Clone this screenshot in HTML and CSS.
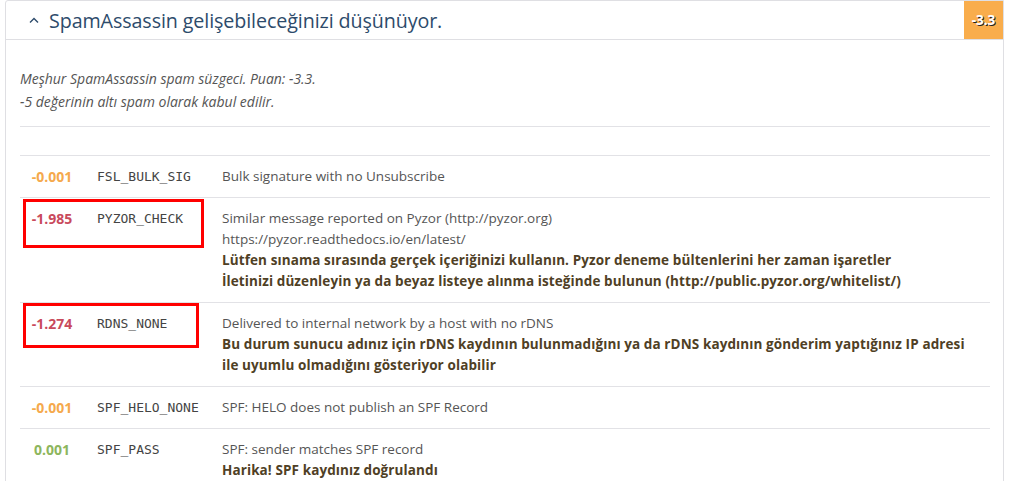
FILE: index.html
```html
<!DOCTYPE html>
<html lang="tr">
<head>
<meta charset="utf-8">
<title>SpamAssassin</title>
<link rel="stylesheet" href="styles.css">
</head>
<body>
<div class="panel">
  <div class="panel-head">
    <svg class="caret" width="10" height="6" viewBox="0 0 10 6"><polyline points="1,5.5 5,1.5 9,5.5" fill="none" stroke="#2d4b6b" stroke-width="1.4"/></svg>
    <h2 class="title">SpamAssassin gelişebileceğinizi düşünüyor.</h2>
    <span class="badge">-3.3</span>
  </div>
  <div class="panel-body">
    <p class="intro">Meşhur SpamAssassin spam süzgeci. Puan: -3.3.<br>-5 değerinin altı spam olarak kabul edilir.</p>
    <hr class="sep">
    <div class="rules">
      <div class="row">
        <div class="score warn">-0.001</div>
        <div class="code">FSL_BULK_SIG</div>
        <div class="desc">Bulk signature with no Unsubscribe</div>
      </div>
      <div class="row">
        <div class="score bad">-1.985</div>
        <div class="code">PYZOR_CHECK</div>
        <div class="desc">Similar message reported on Pyzor (http://pyzor.org)<br>https://pyzor.readthedocs.io/en/latest/<br><strong>Lütfen sınama sırasında gerçek içeriğinizi kullanın. Pyzor deneme bültenlerini her zaman işaretler<br>İletinizi düzenleyin ya da beyaz listeye alınma isteğinde bulunun (http://public.pyzor.org/whitelist/)</strong></div>
        <span class="mark mark-pyzor"></span>
      </div>
      <div class="row">
        <div class="score bad">-1.274</div>
        <div class="code">RDNS_NONE</div>
        <div class="desc">Delivered to internal network by a host with no rDNS<br><strong>Bu durum sunucu adınız için rDNS kaydının bulunmadığını ya da rDNS kaydının gönderim yaptığınız IP adresi<br>ile uyumlu olmadığını gösteriyor olabilir</strong></div>
        <span class="mark mark-rdns"></span>
      </div>
      <div class="row">
        <div class="score warn">-0.001</div>
        <div class="code">SPF_HELO_NONE</div>
        <div class="desc">SPF: HELO does not publish an SPF Record</div>
      </div>
      <div class="row">
        <div class="score good">0.001</div>
        <div class="code">SPF_PASS</div>
        <div class="desc">SPF: sender matches SPF record<br><strong>Harika! SPF kaydınız doğrulandı</strong></div>
      </div>
    </div>
  </div>
</div>
</body>
</html>
```
FILE: styles.css
```css
html, body {
  margin: 0;
  padding: 0;
  background: #fff;
}
body {
  font-family: "Open Sans", "Noto Sans", sans-serif;
  color: #555;
  font-size: 13.5px;
}
.panel {
  margin-left: 5px;
  width: 997px;
  border: 1px solid #dfdfe3;
  border-radius: 3px 0 0 0;
  min-height: 520px;
}
.panel-head {
  display: flex;
  align-items: center;
  height: 38px;
  border-bottom: 1px solid #dfdfe3;
}
.caret {
  margin-left: 23px;
  margin-right: 10px;
  flex: none;
}
.title {
  flex: 1;
  margin: 0;
  font-size: 19.7px;
  font-weight: 400;
  color: #2d4b6b;
  letter-spacing: -0.1px;
}
.badge {
  align-self: stretch;
  width: 39px;
  display: flex;
  align-items: center;
  justify-content: center;
  background: #f9ad4c;
  color: #fff;
  font-weight: 700;
  font-size: 13.5px;
  text-shadow: 1px 1px 0 #222;
}
.panel-body {
  padding: 27px 13px 0 14px;
}
.intro {
  margin: 0;
  font-style: italic;
  font-size: 14px;
  line-height: 23px;
  color: #555;
}
.sep {
  margin: 13px 0 0;
  border: 0;
  border-top: 1px solid #e2e2e6;
}
.rules {
  margin-top: 28px;
}
.row {
  position: relative;
  display: grid;
  grid-template-columns: 64px 138px 1fr;
  border-top: 1px solid #e2e2e6;
  padding: 10px 0;
  line-height: 21px;
}
.score {
  text-align: center;
  font-weight: 700;
  font-size: 14px;
}
.warn { color: #f5a94c; }
.bad { color: #c94a5c; }
.good { color: #8db65d; }
.code {
  padding-left: 13px;
  font-family: "DejaVu Sans Mono", "Liberation Mono", monospace;
  font-size: 13px;
  color: #444;
}
.desc {
  color: #555;
}
.desc strong {
  color: #4f4025;
  font-weight: 700;
  letter-spacing: 0.1px;
}
.mark {
  position: absolute;
  border: 3px solid #f00;
  box-sizing: border-box;
}
.mark-pyzor {
  left: 3px;
  top: 1px;
  width: 181px;
  height: 49px;
}
.mark-rdns {
  left: 3px;
  top: 0;
  width: 176px;
  height: 45px;
}
```
